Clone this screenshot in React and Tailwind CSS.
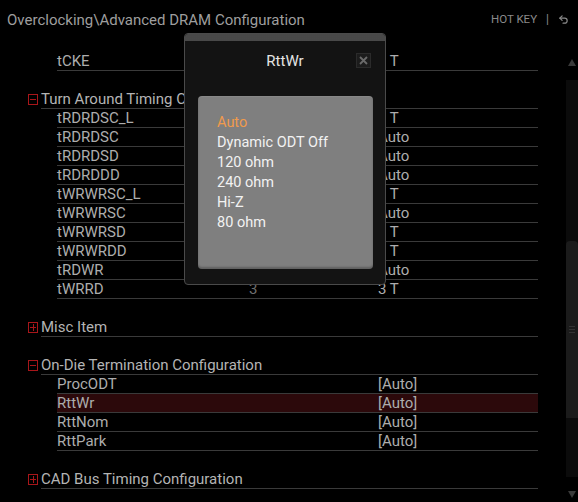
import React from "react";

const F = { fontFamily: "Roboto, 'Liberation Sans', sans-serif" };

function Box({ plus }) {
  return (
    <div className="relative w-[10px] h-[11px] border border-[#a8161a] shrink-0">
      <div className="absolute left-[1px] right-[1px] top-[4px] h-[1px] bg-[#a8161a]" />
      {plus && <div className="absolute top-[1px] bottom-[1px] left-[3.5px] w-[1px] bg-[#a8161a]" />}
    </div>
  );
}

function Header({ label, plus }) {
  return (
    <div className="flex items-center h-[19px]">
      <div className="w-[13px] flex items-center">
        <Box plus={plus} />
      </div>
      <div className="flex-1 h-[19px] border-b border-[#3a3a3a] text-[15px] leading-[18px] text-[#b4b4b4]">
        {label}
      </div>
    </div>
  );
}

function Row({ name, mid, val, hl }) {
  return (
    <div
      className={
        "ml-[29px] flex h-[19px] border-b border-[#3a3a3a] text-[15px] leading-[18px] " +
        (hl ? "bg-[#2c090b]" : "")
      }
    >
      <div className="w-[192px] text-[#adadad]">{name}</div>
      <div className="w-[129px] text-[#6e6e6e]">{mid}</div>
      <div className="text-[#adadad]">{val}</div>
    </div>
  );
}

const Blank = () => <div className="h-[19px]" />;

export default function App() {
  const turn = [
    ["tRDRDSC_L", "1", "1 T"],
    ["tRDRDSC", "Auto", "Auto"],
    ["tRDRDSD", "Auto", "Auto"],
    ["tRDRDDD", "Auto", "Auto"],
    ["tWRWRSC_L", "1", "1 T"],
    ["tWRWRSC", "Auto", "Auto"],
    ["tWRWRSD", "1", "1 T"],
    ["tWRWRDD", "1", "1 T"],
    ["tRDWR", "Auto", "Auto"],
    ["tWRRD", "3", "3 T"],
  ];
  const opts = ["Dynamic ODT Off", "120 ohm", "240 ohm", "Hi-Z", "80 ohm"];
  return (
    <div className="relative w-[578px] h-[502px] bg-black overflow-hidden" style={F}>
      {/* top bar */}
      <div className="h-[52px] flex items-start pt-[9px] pl-[7px] pr-[10px]">
        <div className="flex-1 text-[15px] leading-[22px] text-[#9e9e9e]">
          Overclocking\Advanced DRAM Configuration
        </div>
        <div className="flex items-center gap-[9px] pt-[2px] text-[11.5px] leading-[16px] text-[#8a8a8a]">
          <span>HOT KEY</span>
          <span className="text-[12px]">|</span>
          <svg width="11" height="11" viewBox="0 0 24 24" fill="none" stroke="#8a8a8a" strokeWidth="2.6" strokeLinecap="round" strokeLinejoin="round" className="mr-[-1px]">
            <path d="M9 14 4 9l5-5" />
            <path d="M4 9h10.5a5.5 5.5 0 0 1 0 11H11" />
          </svg>
        </div>
      </div>

      {/* list */}
      <div className="ml-[28px] w-[510px]">
        <Row name="tCKE" mid="1" val="1 T" />
        <Blank />
        <Header label="Turn Around Timing Configuration" />
        {turn.map(([n, m, v]) => (
          <Row key={n} name={n} mid={m} val={v} />
        ))}
        <Blank />
        <Header label="Misc Item" plus />
        <Blank />
        <Header label="On-Die Termination Configuration" />
        <Row name="ProcODT" val="[Auto]" />
        <Row name="RttWr" val="[Auto]" hl />
        <Row name="RttNom" val="[Auto]" />
        <Row name="RttPark" val="[Auto]" />
        <Blank />
        <Header label="CAD Bus Timing Configuration" plus />
      </div>

      {/* scrollbar */}
      <div className="absolute right-0 top-[58px] w-[12px] h-[444px] flex flex-col items-center">
        <svg width="8" height="7" viewBox="0 0 8 7" className="mt-[1px]">
          <path d="M4 0 8 7H0z" fill="#3a3a3a" />
        </svg>
        <div className="relative mt-[14px] w-[12px] h-[397px] bg-[#0b0b0b]">
          <div className="absolute left-0 right-0 top-[161px] h-[177px] bg-[#1b1b1b] rounded-t-[4px] flex flex-col items-center justify-center gap-[2px]">
            <div className="w-[6px] h-[1px] bg-[#333]" />
            <div className="w-[6px] h-[1px] bg-[#333]" />
            <div className="w-[6px] h-[1px] bg-[#333]" />
          </div>
        </div>
        <svg width="8" height="7" viewBox="0 0 8 7" className="mt-[14px]">
          <path d="M0 0h8L4 7z" fill="#3a3a3a" />
        </svg>
      </div>

      {/* popup */}
      <div className="absolute left-[184px] top-[33px] w-[202px] h-[252px] rounded-[4px] border border-[#4a4a4a] bg-[#131313] overflow-hidden">
        <div className="h-[7px] bg-[#1a1a1a] bg-[radial-gradient(circle,#4a4a4a_0.7px,transparent_0.9px)] bg-[length:2px_2px]" />
        <div className="relative h-[55px] flex justify-center pt-[10px] text-[15px] leading-[20px] text-[#e4e4e4]">
          RttWr
          <div className="absolute left-[171px] top-[12px] w-[15px] h-[15px] border border-[#2b2b2b] bg-[#1c1c1c] flex items-center justify-center">
            <svg width="9" height="9" viewBox="0 0 9 9">
              <path d="M1 1 8 8M8 1 1 8" stroke="#6a6a6a" strokeWidth="1.8" />
            </svg>
          </div>
        </div>
        <div className="ml-[13px] w-[175px] h-[173px] rounded-[4px] bg-[#7f7f7f] shadow-[inset_0_-2px_2px_rgba(0,0,0,0.25),inset_0_1px_1px_rgba(255,255,255,0.08)] pl-[19px] pt-[17px] text-[14.5px] leading-[20px]">
          <div className="text-[#f09a4c]">Auto</div>
          {opts.map((o) => (
            <div key={o} className="text-[#f2f2f2]">{o}</div>
          ))}
        </div>
      </div>
    </div>
  );
}
